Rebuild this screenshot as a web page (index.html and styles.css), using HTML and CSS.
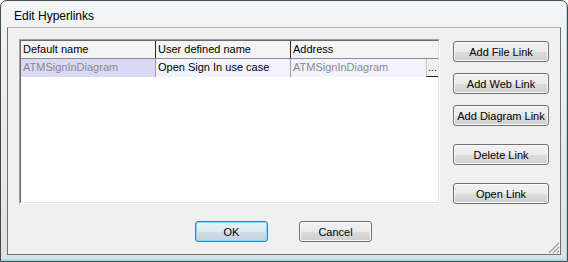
FILE: index.html
```html
<!DOCTYPE html>
<html lang="en">
<head>
    <meta charset="UTF-8">
    <title>Edit Hyperlinks</title>
    <link rel="stylesheet" href="styles.css">
</head>
<body>
    <div class="window">
        <div class="titlebar">Edit Hyperlinks</div>
        <div class="client">
            <div class="main">
                <div class="list">
                    <div class="list-inner">
                        <div class="row header">
                            <div class="cell c1">Default name</div>
                            <div class="cell c2">User defined name</div>
                            <div class="cell c3">Address</div>
                        </div>
                        <div class="row item">
                            <div class="cell c1 dim selected">ATMSignInDiagram</div>
                            <div class="cell c2">Open Sign In use case</div>
                            <div class="cell c3 dim">
                                <span class="addr">ATMSignInDiagram</span>
                                <span class="browse">...</span>
                            </div>
                        </div>
                    </div>
                </div>
                <div class="side">
                    <button class="btn side-btn">Add File Link</button>
                    <button class="btn side-btn">Add Web Link</button>
                    <button class="btn side-btn">Add Diagram Link</button>
                    <button class="btn side-btn far">Delete Link</button>
                    <button class="btn side-btn far">Open Link</button>
                </div>
            </div>
            <div class="footer">
                <button class="btn wide default">OK</button>
                <button class="btn wide">Cancel</button>
            </div>
            <svg class="grip" width="12" height="12" viewBox="0 0 12 12">
                <path d="M11 1 L1 11 M11 5 L5 11 M11 9 L9 11" stroke="#9a9a9a" stroke-width="1.2"/>
                <path d="M12 2 L2 12 M12 6 L6 12 M12 10 L10 12" stroke="#ffffff" stroke-width="1"/>
            </svg>
        </div>
    </div>
</body>
</html>
```

FILE: styles.css
```css
* {
  box-sizing: border-box;
  margin: 0;
  padding: 0;
}

body {
  width: 568px;
  height: 262px;
  background: #ffffff;
  font-family: 'Liberation Sans', Arial, sans-serif;
  font-size: 11px;
  color: #000;
}

.window {
  width: 568px;
  height: 262px;
  display: flex;
  flex-direction: column;
  border: 1px solid #4a4a4a;
  border-radius: 7px 7px 0 0;
  background: linear-gradient(to bottom, #f3f5f7 0%, #e6eaed 60%, #dde2e6 100%);
  padding: 0 6px 6px 6px;
  box-shadow: inset -1px -2px 0 #a6d8ee;
}

.titlebar {
  height: 26px;
  padding: 8px 0 0 7px;
  font-size: 12px;
  color: #000;
  line-height: 14px;
}

.client {
  position: relative;
  flex: 1;
  background: #f0f0f0;
  border: 1px solid #6e6e6e;
  border-top-color: #b8b8b8;
  padding: 11px 10px 0 11px;
}

.main {
  display: flex;
  gap: 13px;
}

.list {
  width: 421px;
  height: 165px;
  border: 1px solid;
  border-color: #a0a0a0 #ffffff #ffffff #a0a0a0;
}

.list-inner {
  height: 100%;
  background: #fff;
  border: 1px solid;
  border-color: #696969 #e3e3e3 #e3e3e3 #696969;
}

.row {
  display: flex;
  height: 18px;
}

.header {
  background: #f4f4f4;
  border-bottom: 1px solid #8c8c8c;
}

.cell {
  padding: 0 2px;
  line-height: 17px;
  white-space: nowrap;
  overflow: hidden;
  font-size: 11px;
}

.c1, .c2 {
  width: 135px;
  border-right: 1px solid #2a2a2a;
}

.c3 {
  flex: 1;
}

.item .cell {
  background: #f2f2fd;
  border-right-color: #a0a0a0;
}

.item .selected {
  background: #d9d9f6;
}

.dim {
  color: #8a8a8a;
}

.item .c3 {
  display: flex;
  padding-right: 0;
}

.addr {
  flex: 1;
}

.browse {
  width: 12px;
  background: #f0f0f0;
  border-left: 1px solid #c8c8c8;
  border-bottom: 1px solid #202020;
  color: #000;
  font-size: 10px;
  text-align: center;
  line-height: 18px;
}

.side {
  display: flex;
  flex-direction: column;
  padding-top: 2px;
  gap: 11px;
}

.btn {
  height: 21px;
  font-family: 'Liberation Sans', Arial, sans-serif;
  font-size: 11px;
  color: #000;
  border: 1px solid #707070;
  border-radius: 3px;
  background: linear-gradient(to bottom, #f2f2f2 0%, #ebebeb 50%, #dddddd 51%, #cfcfcf 100%);
  box-shadow: inset 0 0 0 1px #fbfbfb;
}

.side-btn {
  width: 96px;
}

.side-btn.far {
  margin-top: 7px;
}

.footer {
  display: flex;
  gap: 31px;
  padding: 17px 0 0 176px;
}

.wide {
  width: 73px;
}

.default {
  border-color: #3c7fb1;
  background: linear-gradient(to bottom, #eaf3f8 0%, #dde9f1 50%, #cfdde7 51%, #c3d4df 100%);
  box-shadow: inset 0 0 0 1px #86d9f7;
}

.grip {
  position: absolute;
  right: 0;
  bottom: 0;
}
```
